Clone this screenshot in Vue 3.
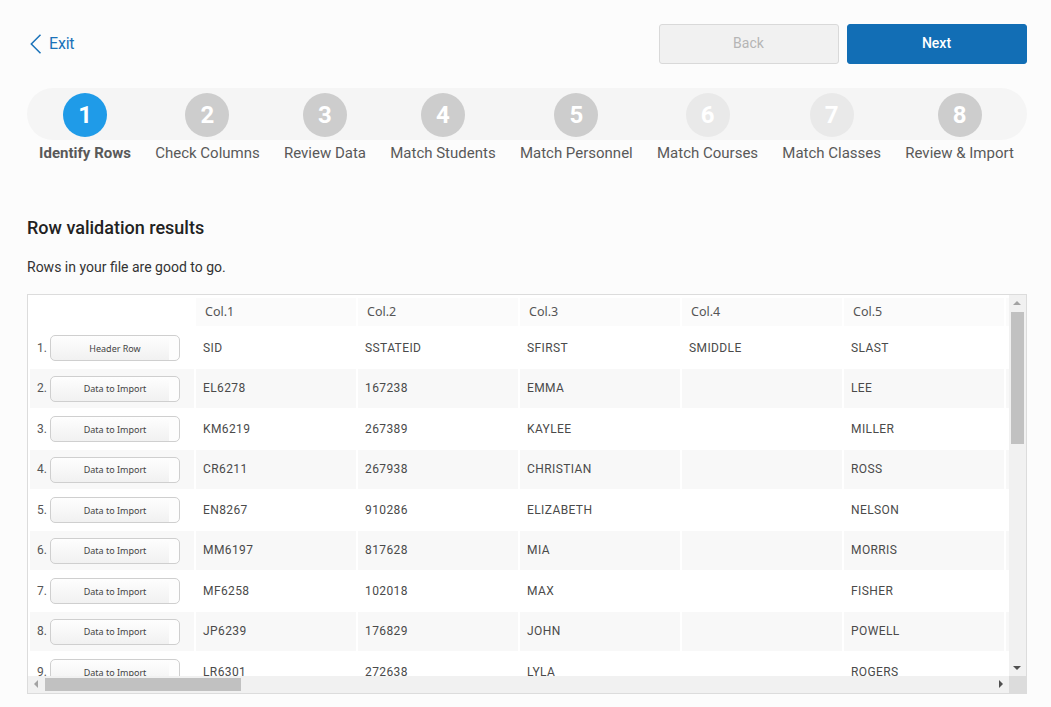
<script setup>
const steps = [
  { n: 1, label: 'Identify Rows', state: 'active' },
  { n: 2, label: 'Check Columns', state: '' },
  { n: 3, label: 'Review Data', state: '' },
  { n: 4, label: 'Match Students', state: '' },
  { n: 5, label: 'Match Personnel', state: '' },
  { n: 6, label: 'Match Courses', state: 'faded' },
  { n: 7, label: 'Match Classes', state: 'faded' },
  { n: 8, label: 'Review & Import', state: '' },
]
const headers = ['Col.1', 'Col.2', 'Col.3', 'Col.4', 'Col.5', '']
const rows = [
  { tag: 'Header Row', cells: ['SID', 'SSTATEID', 'SFIRST', 'SMIDDLE', 'SLAST', ''] },
  { tag: 'Data to Import', cells: ['EL6278', '167238', 'EMMA', '', 'LEE', ''] },
  { tag: 'Data to Import', cells: ['KM6219', '267389', 'KAYLEE', '', 'MILLER', ''] },
  { tag: 'Data to Import', cells: ['CR6211', '267938', 'CHRISTIAN', '', 'ROSS', ''] },
  { tag: 'Data to Import', cells: ['EN8267', '910286', 'ELIZABETH', '', 'NELSON', ''] },
  { tag: 'Data to Import', cells: ['MM6197', '817628', 'MIA', '', 'MORRIS', ''] },
  { tag: 'Data to Import', cells: ['MF6258', '102018', 'MAX', '', 'FISHER', ''] },
  { tag: 'Data to Import', cells: ['JP6239', '176829', 'JOHN', '', 'POWELL', ''] },
  { tag: 'Data to Import', cells: ['LR6301', '272638', 'LYLA', '', 'ROGERS', ''] },
]
</script>

<template>
  <div class="page">
    <header class="topbar">
      <a class="exit">
        <svg class="exit-icon" width="12" height="20" viewBox="0 0 12 20" fill="none">
          <path d="M10.5 .8 1.3 10l9.2 9.2" stroke="#1a72b9" stroke-width="1.5" />
        </svg>
        <span>Exit</span>
      </a>
      <div class="actions">
        <button class="btn btn-back">Back</button>
        <button class="btn btn-next">Next</button>
      </div>
    </header>

    <nav class="stepper">
      <div v-for="s in steps" :key="s.n" class="step" :class="s.state">
        <span class="circle">{{ s.n }}</span>
        <span class="label">{{ s.label }}</span>
      </div>
    </nav>

    <h2 class="title">Row validation results</h2>
    <p class="note">Rows in your file are good to go.</p>

    <section class="box">
      <div class="upper">
        <div class="viewport">
          <div class="row head">
            <div class="cell first"></div>
            <div v-for="(h, k) in headers" :key="k" class="cell hcell">{{ h }}</div>
          </div>
          <div v-for="(r, i) in rows" :key="i" class="row" :class="{ odd: i % 2 === 1 }">
            <div class="cell first">
              <span class="num">{{ i + 1 }}.</span>
              <button class="tag">{{ r.tag }}</button>
            </div>
            <div v-for="(c, j) in r.cells" :key="j" class="cell">{{ c }}</div>
          </div>
        </div>
        <div class="vbar">
          <span class="arrow up"></span>
          <span class="vthumb"></span>
          <span class="arrow down"></span>
        </div>
      </div>
      <div class="lower">
        <div class="hbar">
          <span class="arrow left"></span>
          <span class="hthumb"></span>
          <span class="arrow right"></span>
        </div>
        <div class="corner"></div>
      </div>
    </section>
  </div>
</template>

<style>
html, body { margin: 0; background: #fcfcfc; }
</style>

<style scoped>
.page {
  box-sizing: border-box;
  width: 1051px;
  height: 707px;
  padding: 24px 24px 0 27px;
  background: #fcfcfc;
  font-family: Roboto, sans-serif;
  overflow: hidden;
}
.topbar {
  display: flex;
  justify-content: space-between;
  align-items: center;
  height: 40px;
}
.exit {
  display: flex;
  align-items: center;
  gap: 7px;
  margin-left: 3px;
  margin-bottom: 1px;
  color: #1a72b9;
  font-size: 16px;
  letter-spacing: -0.2px;
}
.actions { display: flex; gap: 8px; }
.btn {
  box-sizing: border-box;
  width: 180px;
  height: 40px;
  border-radius: 3px;
  font-family: Roboto, sans-serif;
  font-size: 14px;
  padding: 0 1px 2px 0;
}
.btn-back { background: #f1f1f1; border: 1px solid #d9d9d9; color: #b5b5b5; }
.btn-next { background: #126eb5; border: 1px solid #126eb5; color: #fff; font-weight: 500; }

.stepper {
  box-sizing: border-box;
  position: relative;
  display: flex;
  justify-content: space-around;
  width: 1000px;
  padding-right: 1px;
  margin-top: 24px;
}
.stepper::before {
  content: '';
  position: absolute;
  left: 0;
  top: 0;
  width: 100%;
  height: 52px;
  border-radius: 26px;
  background: #f5f5f5;
}
.step {
  position: relative;
  display: flex;
  flex-direction: column;
  align-items: center;
  padding-top: 5px;
}
.circle {
  width: 44px;
  height: 44px;
  border-radius: 50%;
  background: #cdcdcd;
  color: #fff;
  font-size: 24px;
  font-weight: 700;
  line-height: 44px;
  text-align: center;
}
.label {
  margin-top: 6px;
  font-size: 15px;
  line-height: 21px;
  color: #595959;
  white-space: nowrap;
}
.active .circle { background: #1f9be8; }
.active .label { font-weight: 700; }
.faded .circle { background: #e9e9e9; }

.title {
  margin: 53px 0 0;
  font-size: 18px;
  font-weight: 500;
  line-height: 22px;
  color: #222;
}
.note {
  margin: 18px 0 0;
  font-size: 14px;
  line-height: 20px;
  color: #333;
}

.box {
  box-sizing: border-box;
  width: 1000px;
  height: 400px;
  margin-top: 17px;
  border: 1px solid #dcdcdc;
  background: #fff;
  display: flex;
  flex-direction: column;
}
.upper { display: flex; height: 381px; }
.viewport {
  flex: 1;
  min-width: 0;
  overflow: hidden;
  padding: 3px 0 0 2px;
}
.row {
  display: grid;
  grid-template-columns: 164px repeat(6, 160px);
  column-gap: 2px;
  height: 38.5px;
  margin-bottom: 2px;
  width: max-content;
}
.row.head { height: 28px; margin-bottom: 2.5px; }
.cell {
  display: flex;
  align-items: center;
  padding-left: 7px;
  font-size: 12px;
  letter-spacing: 0.4px;
  color: #4a4a4a;
}
.row.odd .cell { background: #f8f8f8; }
.hcell {
  background: #fbfbfb;
  padding: 0 0 2px 9px;
  box-sizing: border-box;
  font-family: 'Noto Sans', sans-serif;
  font-size: 12.5px;
  letter-spacing: 0;
  color: #555;
}
.first { padding-left: 7px; gap: 3px; }
.num { width: 10px; color: #555; letter-spacing: 0; }
.tag {
  box-sizing: border-box;
  width: 130px;
  height: 26px;
  margin-top: 1px;
  padding: 0;
  border: 1px solid #cfcfcf;
  border-radius: 5px;
  background:
    linear-gradient(to right, transparent 0, transparent 118px, #fdfdfd 118px),
    linear-gradient(to bottom, #fefefe 0, #f1f1f1 100%);
  font-family: 'Noto Sans', sans-serif;
  font-size: 9px;
  color: #444;
}

.vbar {
  position: relative;
  width: 17px;
  background: #f1f1f1;
}
.vthumb {
  position: absolute;
  left: 2px;
  top: 17px;
  width: 13px;
  height: 132px;
  background: #c1c1c1;
}
.lower { display: flex; height: 17px; }
.hbar {
  position: relative;
  flex: 1;
  background: #f1f1f1;
}
.hthumb {
  position: absolute;
  left: 17px;
  top: 2px;
  width: 196px;
  height: 13px;
  background: #c1c1c1;
}
.corner { width: 17px; background: #dcdcdc; }
.arrow { position: absolute; width: 0; height: 0; border: 4px solid transparent; }
.arrow.up { left: 4px; top: 2px; border-bottom-color: #a3a3a3; }
.arrow.down { left: 4px; bottom: 2px; border-top-color: #505050; }
.arrow.left { left: 2px; top: 4px; border-right-color: #a3a3a3; }
.arrow.right { right: 2px; top: 4px; border-left-color: #505050; }
</style>
